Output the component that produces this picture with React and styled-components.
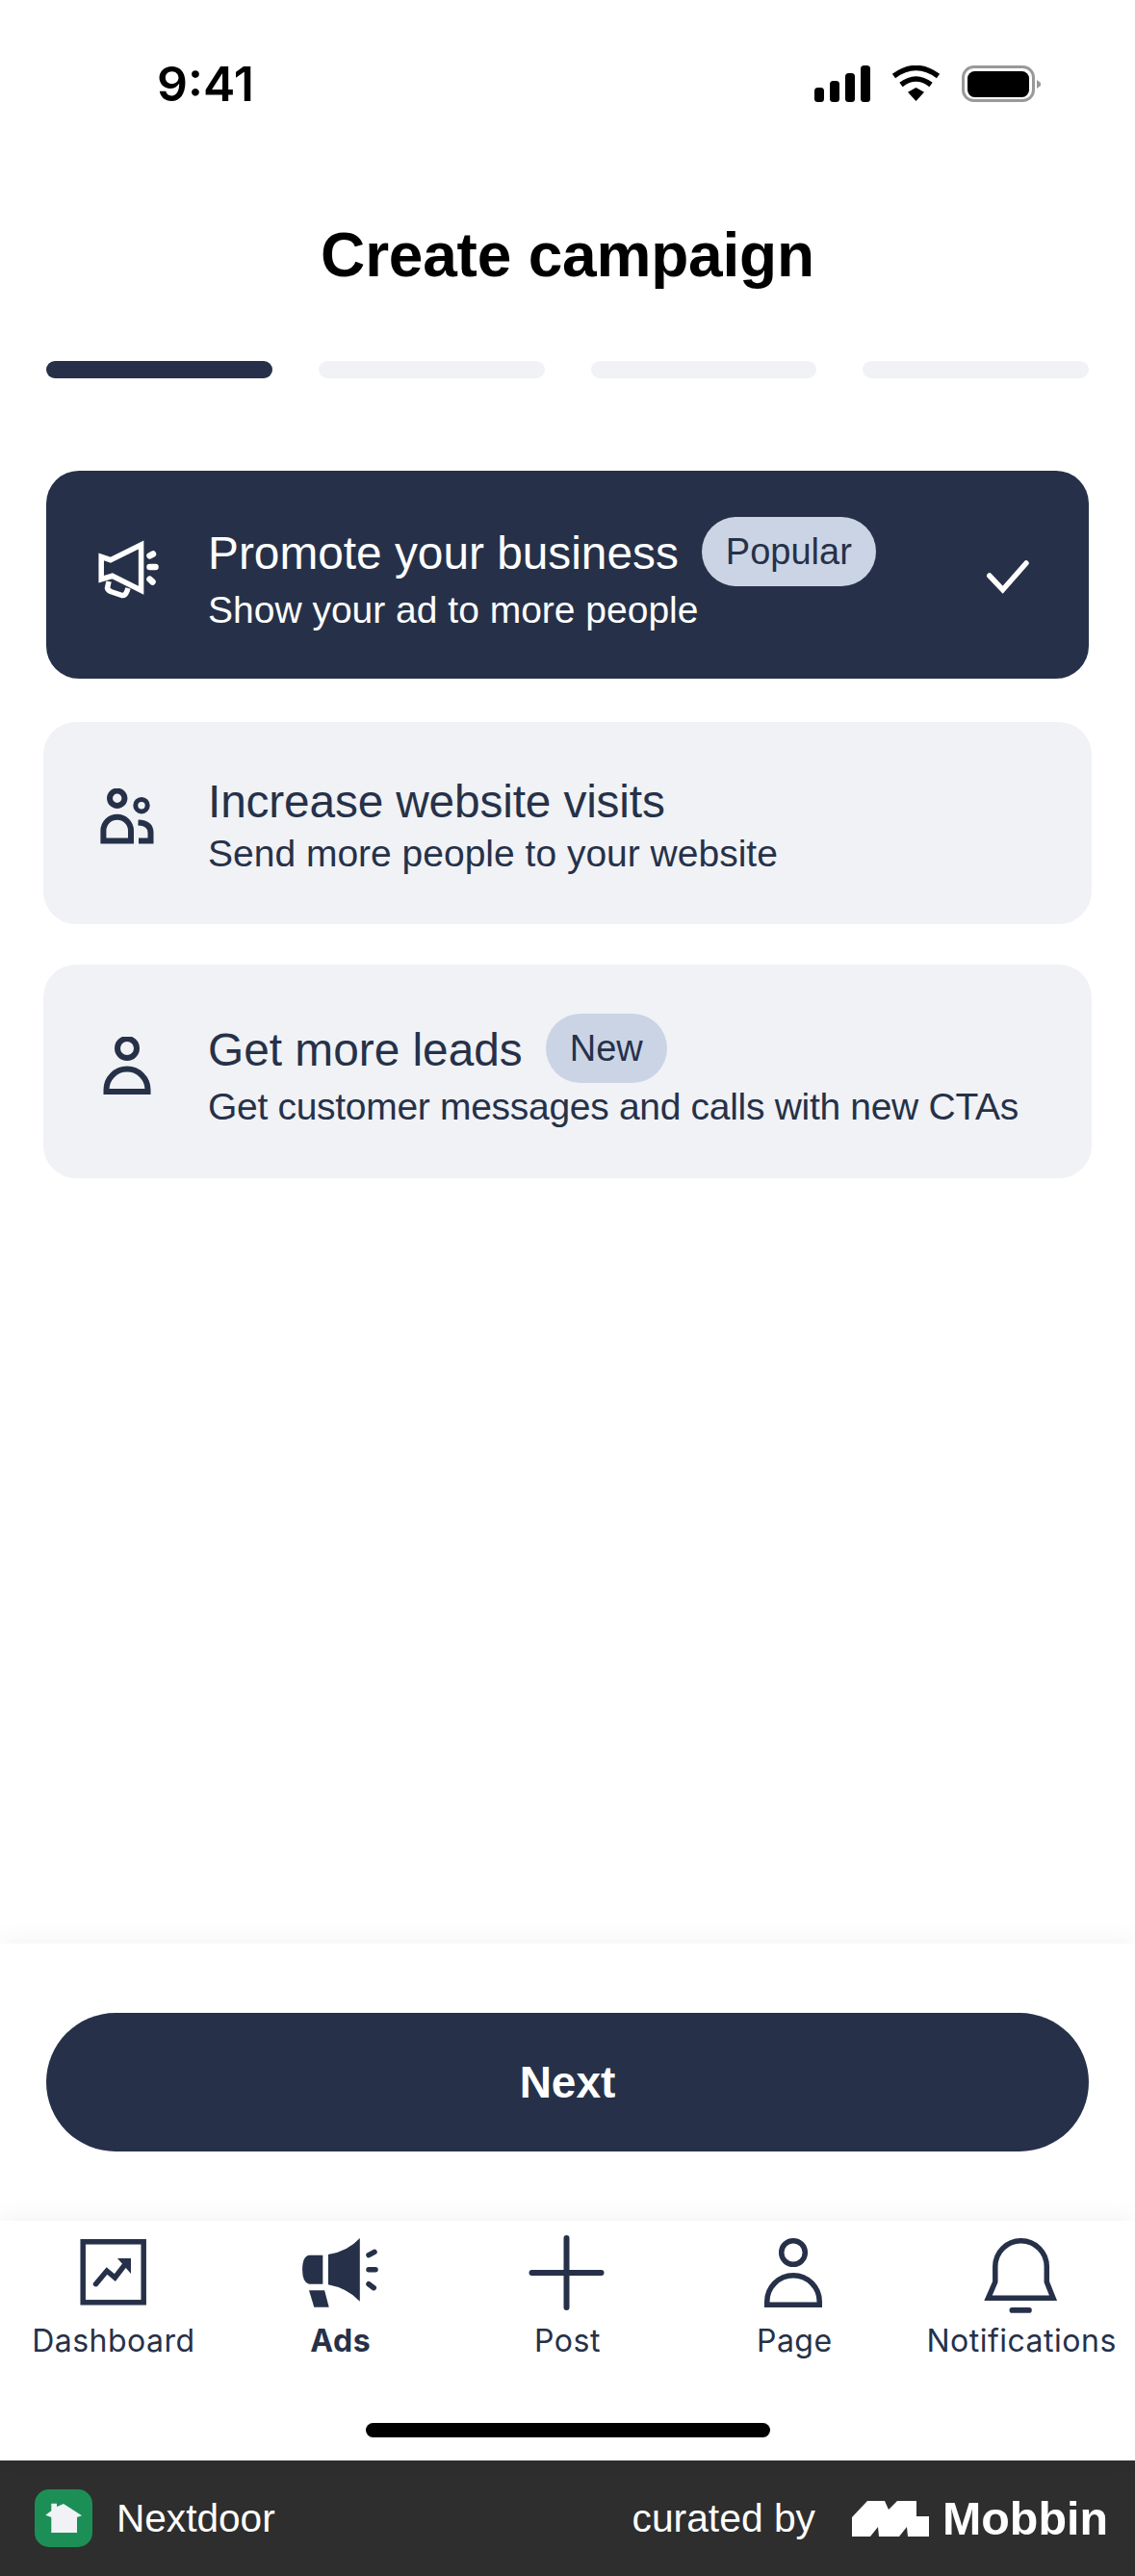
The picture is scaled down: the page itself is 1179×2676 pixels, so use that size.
import React from "react";
import styled, { createGlobalStyle } from "styled-components";

const NAVY = "#263149";

const GlobalStyle = createGlobalStyle`
  html, body { margin: 0; padding: 0; background: #fff; }
  * { box-sizing: border-box; }
`;

const Screen = styled.div`
  width: 1179px;
  height: 2676px;
  display: flex;
  flex-direction: column;
  overflow: hidden;
  background: #fff;
  font-family: "Liberation Sans", Arial, sans-serif;
  color: ${NAVY};
`;

const StatusBar = styled.div`
  height: 130px;
  padding: 68px 98px 0 163px;
  display: flex;
  justify-content: space-between;
  align-items: flex-start;
`;
const Time = styled.span`
  font-family: Inter, sans-serif;
  font-weight: 600;
  font-size: 50px;
  line-height: 39px;
  color: #000;
`;
const StatusIcons = styled.div`
  display: flex;
  align-items: flex-start;
`;
const StatusGlyph = styled.svg`
  display: block;
  margin-left: ${(p) => p.$gap || 0}px;
`;

const Title = styled.h1`
  margin: 0;
  height: 245px;
  padding-top: 95px;
  text-align: center;
  font-size: 64px;
  line-height: 80px;
  font-weight: 700;
  color: #000;
  letter-spacing: -0.2px;
`;

const Steps = styled.div`
  padding: 0 48px;
  display: grid;
  grid-template-columns: repeat(4, 1fr);
  gap: 48px;
`;
const Step = styled.div`
  height: 18px;
  border-radius: 9px;
  background: ${(p) => (p.$active ? NAVY : "#f0f2f5")};
`;

const Cards = styled.div`
  margin-top: 96px;
  padding: 0 48px;
  display: flex;
  flex-direction: column;
`;
const Card = styled.div`
  height: ${(p) => p.$h}px;
  margin: ${(p) => p.$mt}px ${(p) => (p.$active ? 0 : -3)}px 0;
  padding: 0 60px 0 ${(p) => (p.$active ? 48 : 51)}px;
  border-radius: 34px;
  display: flex;
  align-items: center;
  background: ${(p) => (p.$active ? NAVY : "#f0f2f5")};
  color: ${(p) => (p.$active ? "#fff" : NAVY)};
`;
const CardIcon = styled.svg`
  flex: none;
  display: block;
  margin-right: 48px;
`;
const CardText = styled.div`
  flex: 1;
  min-width: 0;
  padding-top: ${(p) => p.$nudge || 0}px;
`;
const CardTitleRow = styled.div`
  display: flex;
  align-items: center;
  min-height: ${(p) => (p.$badged ? 72 : 52)}px;
`;
const CardTitle = styled.span`
  padding-top: 3px;
  font-size: 47.8px;
  line-height: 52px;
  white-space: nowrap;
  letter-spacing: ${(p) => (p.$tight ? "-0.15px" : "0")};
`;
const Badge = styled.span`
  margin-left: 24px;
  height: 72px;
  padding: 0 25px;
  border-radius: 36px;
  display: flex;
  align-items: center;
  background: #cbd4e5;
  color: ${NAVY};
  font-size: 38px;
`;
const CardSub = styled.div`
  margin-top: ${(p) => p.$gap || 0}px;
  font-size: 39px;
  line-height: 50px;
  white-space: nowrap;
  letter-spacing: ${(p) => (p.$tight ? "-0.3px" : "0")};
`;
const Check = styled.svg`
  flex: none;
  display: block;
`;

const Spacer = styled.div`
  flex: 1;
`;

const Footer = styled.div`
  position: relative;
  height: 288px;
  padding: 72px 48px;
  background: #fff;
  box-shadow: 0 -4px 24px rgba(0, 0, 0, 0.05);
`;
const NextButton = styled.button`
  width: 100%;
  height: 144px;
  border: none;
  border-radius: 72px;
  background: ${NAVY};
  color: #fff;
  font-family: inherit;
  font-weight: 700;
  font-size: 46px;
`;

const TabBar = styled.nav`
  position: relative;
  height: 249px;
  padding-top: 13px;
  background: #fff;
  box-shadow: 0 -4px 24px rgba(0, 0, 0, 0.05);
`;
const TabRow = styled.div`
  display: grid;
  grid-template-columns: repeat(5, 1fr);
`;
const Tab = styled.div`
  display: flex;
  flex-direction: column;
  align-items: center;
  font-family: Inter, sans-serif;
  font-size: 32px;
  line-height: 40px;
  font-weight: ${(p) => (p.$active ? 700 : 400)};
  letter-spacing: 0.5px;
  white-space: nowrap;
`;
const TabIcon = styled.svg`
  display: block;
  margin-bottom: 8px;
`;
const HomeIndicator = styled.div`
  width: 420px;
  height: 15px;
  margin: 65px auto 0;
  border-radius: 8px;
  background: #000;
`;

const BrandBar = styled.div`
  height: 120px;
  padding: 0 28px 0 36px;
  display: flex;
  align-items: center;
  background: #2e2e2e;
  color: #fff;
`;
const AppBadge = styled.svg`
  display: block;
  margin-right: 25px;
`;
const AppName = styled.span`
  font-size: 40.6px;
`;
const Curated = styled.span`
  margin-left: auto;
  font-size: 40.8px;
`;
const MobbinMark = styled.svg`
  display: block;
  margin: 0 14px 0 38px;
`;
const MobbinName = styled.span`
  font-size: 48.4px;
  font-weight: 700;
`;

const SignalIcon = () => (
  <StatusGlyph width="58" height="38" viewBox="0 0 58 38" fill="#000">
    <rect x="0" y="23" width="10" height="15" rx="3.5" />
    <rect x="16" y="16" width="10" height="22" rx="3.5" />
    <rect x="32" y="8" width="10" height="30" rx="3.5" />
    <rect x="48" y="0" width="10" height="38" rx="3.5" />
  </StatusGlyph>
);

const WifiIcon = () => (
  <StatusGlyph $gap={22} width="51" height="38" viewBox="0 0 51 38" fill="none" stroke="#000">
    <path d="M2.5 11 Q25.5 -6 48.5 11" strokeWidth="5.5" />
    <path d="M10 20 Q25.5 8 41 20" strokeWidth="5.5" />
    <path d="M17 27.7 L25.5 23 L34 27.7 L25.5 37 Z" fill="#000" stroke="none" />
  </StatusGlyph>
);

const BatteryIcon = () => (
  <StatusGlyph $gap={22} width="82" height="38" viewBox="0 0 82 38">
    <rect x="1.5" y="1.5" width="73" height="35" rx="11" fill="none" stroke="#999" strokeWidth="3" />
    <rect x="6" y="6" width="64" height="27" rx="7.5" fill="#000" />
    <path d="M78 15 L82 18 V21 L78 24 Z" fill="#999" />
  </StatusGlyph>
);

const MegaphoneOutline = () => (
  <CardIcon width="72" height="72" viewBox="0 0 72 72" fill="none" stroke="currentColor" strokeWidth="5.5">
    <path d="M9.2 17.3 L18.8 20.7 L50.6 5 V52.3 L20.7 37.3 L9.2 40.7 Z" />
    <path d="M17 43 L15.5 50 Q16 52 19 53.5 L31 57.5 Q34 58 36 53 L37 50" />
    <path d="M59.5 16.3 L63 14.5 M59.5 28 H65.5 M59.5 40.7 L62.5 43.5" strokeWidth="6.5" strokeLinecap="round" />
  </CardIcon>
);

const PeopleOutline = () => (
  <CardIcon width="72" height="72" viewBox="0 0 72 72" fill="none" stroke="currentColor" strokeWidth="6">
    <circle cx="25.7" cy="10.3" r="7.7" />
    <circle cx="51" cy="17.7" r="6.2" strokeWidth="5" />
    <path d="M11.4 54.5 V44 A14.3 14.3 0 0 1 40 44 V54.5 Z" />
    <path d="M47.5 35.5 Q60.5 36 60.5 46 V54.5 H48" />
  </CardIcon>
);

const PersonOutline = () => (
  <CardIcon width="72" height="72" viewBox="0 0 72 72" fill="none" stroke="currentColor" strokeWidth="6">
    <circle cx="36" cy="12" r="10" />
    <path d="M14.5 57 V55 A21.5 21.5 0 0 1 57.5 55 V57 Z" />
  </CardIcon>
);

const CheckMark = () => (
  <Check width="48" height="48" viewBox="0 0 48 48" fill="none" stroke="#fff" strokeWidth="5.5" strokeLinecap="round">
    <path d="M4.8 25 L18.6 39.7 L43 12" />
  </Check>
);

const DashboardTab = () => (
  <TabIcon width="90" height="84" viewBox="0 0 90 84" fill="none" stroke={NAVY} strokeWidth="5.5">
    <rect x="13.2" y="8.8" width="63" height="63" />
    <path d="M26.5 52.7 L38 39 L46.4 46 L58 31" strokeLinecap="round" />
    <path d="M49 26 H63 V42 Z" fill={NAVY} stroke="none" />
  </TabIcon>
);

const AdsTab = () => (
  <TabIcon width="90" height="84" viewBox="0 0 90 84" fill={NAVY}>
    <path d="M26.3 22.7 H12 Q5.1 24 5.1 37.7 Q5.1 51 12 52.7 H26.3 Z" />
    <path d="M31.9 22 Q52 19 64.8 5 V70.7 Q52 57 31.9 53.3 Z" />
    <path d="M12 59.3 H28.1 L32.7 76.7 H17.3 Z" />
    <path d="M74 22.7 L80 19.3 M74 37.7 H81 M74 52.7 L79.3 56.7" fill="none" stroke={NAVY} strokeWidth="5.5" strokeLinecap="round" />
  </TabIcon>
);

const PostTab = () => (
  <TabIcon width="90" height="84" viewBox="0 0 90 84" fill="none" stroke={NAVY} strokeWidth="6" strokeLinecap="round">
    <path d="M44.5 5 V77 M8.5 41 H80.5" />
  </TabIcon>
);

const PageTab = () => (
  <TabIcon width="90" height="84" viewBox="0 0 90 84" fill="none" stroke={NAVY} strokeWidth="5.5">
    <circle cx="44" cy="20" r="12.3" />
    <path d="M16.75 74.25 V71 A27.25 27.25 0 0 1 71.25 71 V74.25 Z" />
  </TabIcon>
);

const BellTab = () => (
  <TabIcon width="90" height="84" viewBox="0 0 90 84" fill="none" stroke={NAVY} strokeWidth="5.5">
    <path d="M17.8 34.5 A26.75 26.75 0 0 1 71.3 34.5 V50.5 L78 67.3 H10.5 L17.8 50.5 Z" />
    <rect x="32.5" y="77" width="23.3" height="5.7" rx="2.8" fill={NAVY} stroke="none" />
  </TabIcon>
);

const NextdoorBadge = () => (
  <AppBadge width="60" height="60" viewBox="0 0 60 60">
    <rect width="60" height="60" rx="15" fill="#1c8f57" />
    <path
      d="M30 15 L49 27.3 L44 29 V45 H17.3 V29 L11.3 26.7 L17.3 22.3 V14.7 H23 V18 Z"
      fill="#f0f2f5"
    />
  </AppBadge>
);

const MobbinLogo = () => (
  <MobbinMark width="80" height="37" viewBox="6 6 80 37" fill="#fff">
    <path d="M6 23 L22 6 H40 L44 15 L53 6 H73 V22 H86 V43 H64 L63 33 L55 43 H34 L33 33 L25 43 H6 Z" />
  </MobbinMark>
);

const cards = [
  { title: "Promote your business", sub: "Show your ad to more people", badge: "Popular", icon: <MegaphoneOutline />, active: true, h: 216, mt: 0, nudge: 2 },
  { title: "Increase website visits", sub: "Send more people to your website", icon: <PeopleOutline />, h: 210, mt: 45, nudge: 6, subGap: 3, tightTitle: true },
  { title: "Get more leads", sub: "Get customer messages and calls with new CTAs", badge: "New", icon: <PersonOutline />, h: 222, mt: 42, nudge: 2, tightSub: true },
];

const tabs = [
  { label: "Dashboard", icon: <DashboardTab /> },
  { label: "Ads", icon: <AdsTab />, active: true },
  { label: "Post", icon: <PostTab /> },
  { label: "Page", icon: <PageTab /> },
  { label: "Notifications", icon: <BellTab /> },
];

export default function App() {
  return (
    <Screen>
      <GlobalStyle />
      <StatusBar>
        <Time>9:41</Time>
        <StatusIcons>
          <SignalIcon />
          <WifiIcon />
          <BatteryIcon />
        </StatusIcons>
      </StatusBar>

      <Title>Create campaign</Title>

      <Steps>
        <Step $active />
        <Step />
        <Step />
        <Step />
      </Steps>

      <Cards>
        {cards.map((c) => (
          <Card key={c.title} $active={c.active} $h={c.h} $mt={c.mt}>
            {c.icon}
            <CardText $nudge={c.nudge}>
              <CardTitleRow $badged={!!c.badge}>
                <CardTitle $tight={c.tightTitle}>{c.title}</CardTitle>
                {c.badge && <Badge>{c.badge}</Badge>}
              </CardTitleRow>
              <CardSub $tight={c.tightSub} $gap={c.subGap}>{c.sub}</CardSub>
            </CardText>
            {c.active && <CheckMark />}
          </Card>
        ))}
      </Cards>

      <Spacer />

      <Footer>
        <NextButton>Next</NextButton>
      </Footer>

      <TabBar>
        <TabRow>
          {tabs.map((t) => (
            <Tab key={t.label} $active={t.active}>
              {t.icon}
              {t.label}
            </Tab>
          ))}
        </TabRow>
        <HomeIndicator />
      </TabBar>

      <BrandBar>
        <NextdoorBadge />
        <AppName>Nextdoor</AppName>
        <Curated>curated by</Curated>
        <MobbinLogo />
        <MobbinName>Mobbin</MobbinName>
      </BrandBar>
    </Screen>
  );
}
